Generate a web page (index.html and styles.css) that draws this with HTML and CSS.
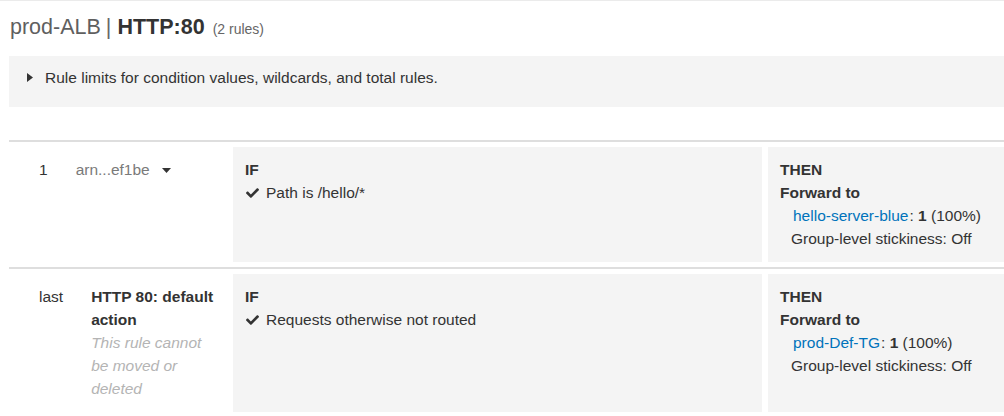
FILE: index.html
```html
<!DOCTYPE html>
<html lang="en">
<head>
<meta charset="utf-8">
<title>prod-ALB | HTTP:80</title>
<link rel="stylesheet" href="styles.css">
</head>
<body>
<div class="page">
  <header class="title">
    <span class="lb">prod-ALB</span><span class="sep">|</span><span class="listener">HTTP:80</span><span class="count">(2 rules)</span>
  </header>

  <div class="limits">
    <svg class="caret-right" width="6" height="9" viewBox="0 0 6 9"><polygon points="0,0 6,4.5 0,9" fill="#333"/></svg>
    <span>Rule limits for condition values, wildcards, and total rules.</span>
  </div>

  <div class="rules">
    <div class="rule">
      <div class="meta">
        <span class="num">1</span>
        <span class="name arn">arn...ef1be<svg class="caret-down" width="9" height="5" viewBox="0 0 9 5"><polygon points="0,0 9,0 4.5,5" fill="#333"/></svg></span>
      </div>
      <div class="cell cond">
        <div class="label">IF</div>
        <div class="condition"><svg class="check" width="13" height="10" viewBox="0 64 512 384"><path d="M173.898 439.404l-166.4-166.4c-9.997-9.997-9.997-26.206 0-36.204l36.203-36.204c9.997-9.998 26.207-9.998 36.204 0L192 312.69 432.095 72.596c9.997-9.997 26.207-9.997 36.204 0l36.203 36.204c9.997 9.997 9.997 26.206 0 36.204l-294.4 294.401c-9.998 9.997-26.207 9.997-36.204-.001z" fill="#333"/></svg>Path is /hello/*</div>
      </div>
      <div class="cell action">
        <div class="label">THEN</div>
        <div class="label">Forward to</div>
        <div class="targets">
          <div class="target"><a href="#" class="tg">hello-server-blue</a>: <b>1</b> (100%)</div>
          <div class="sticky">Group-level stickiness: Off</div>
        </div>
      </div>
    </div>

    <div class="rule">
      <div class="meta">
        <span class="num">last</span>
        <span class="name">
          <span class="default">HTTP 80: default action</span>
          <span class="note">This rule cannot be moved or deleted</span>
        </span>
      </div>
      <div class="cell cond">
        <div class="label">IF</div>
        <div class="condition"><svg class="check" width="13" height="10" viewBox="0 64 512 384"><path d="M173.898 439.404l-166.4-166.4c-9.997-9.997-9.997-26.206 0-36.204l36.203-36.204c9.997-9.998 26.207-9.998 36.204 0L192 312.69 432.095 72.596c9.997-9.997 26.207-9.997 36.204 0l36.203 36.204c9.997 9.997 9.997 26.206 0 36.204l-294.4 294.401c-9.998 9.997-26.207 9.997-36.204-.001z" fill="#333"/></svg>Requests otherwise not routed</div>
      </div>
      <div class="cell action">
        <div class="label">THEN</div>
        <div class="label">Forward to</div>
        <div class="targets">
          <div class="target"><a href="#" class="tg">prod-Def-TG</a>: <b>1</b> (100%)</div>
          <div class="sticky">Group-level stickiness: Off</div>
        </div>
      </div>
    </div>
  </div>
</div>
</body>
</html>
```

FILE: styles.css
```css
* { box-sizing: border-box; }

html, body {
  margin: 0;
  padding: 0;
  background: #fff;
}

body {
  font-family: "Liberation Sans", Arial, sans-serif;
  font-size: 15.5px;
  line-height: 23px;
  color: #333;
  overflow: hidden;
}

.page {
  border-top: 1px solid #ebebeb;
  padding-left: 9px;
}

.title {
  padding: 12px 0 0 1px;
  height: 55px;
  font-size: 21.5px;
  line-height: 29px;
  color: #555;
}

.title .lb { color: #5f5f5f; }

.title .sep {
  color: #666;
  margin: 0 6px 0 5px;
}

.title .listener {
  font-weight: bold;
  color: #333;
}

.title .count {
  font-size: 14px;
  color: #666;
  margin-left: 8px;
}

.limits {
  background: #f4f4f4;
  padding: 10px 0 18px 18px;
  display: flex;
  align-items: center;
  gap: 12px;
}

.caret-right { flex: none; margin-top: -1px; }

.rules { margin-top: 33px; }

.rule {
  border-top: 2px solid #dedede;
  padding: 5px 0;
  display: flex;
}

.meta {
  flex: 0 0 224px;
  display: flex;
  gap: 28px;
  padding: 11px 12px 12px 30px;
}

.num { flex: none; }

.name { flex: 1; min-width: 0; }

.arn { color: #7a7a7a; }

.caret-down {
  margin-left: 12px;
  vertical-align: 2px;
}

.default {
  display: block;
  font-weight: bold;
}

.note {
  display: block;
  font-style: italic;
  color: #b4b4b4;
}

.cell {
  background: #f4f4f4;
  padding: 11px 12px 12px;
}

.cond { flex: 0 0 529px; }

.action {
  flex: 1;
  margin-left: 6px;
}

.label { font-weight: bold; }

.check {
  margin: 0 7px 0 1px;
  vertical-align: baseline;
}

.targets { padding-left: 11px; }

.tg {
  color: #0073bb;
  text-decoration: none;
  margin: 0 1px 0 2px;
}
```
